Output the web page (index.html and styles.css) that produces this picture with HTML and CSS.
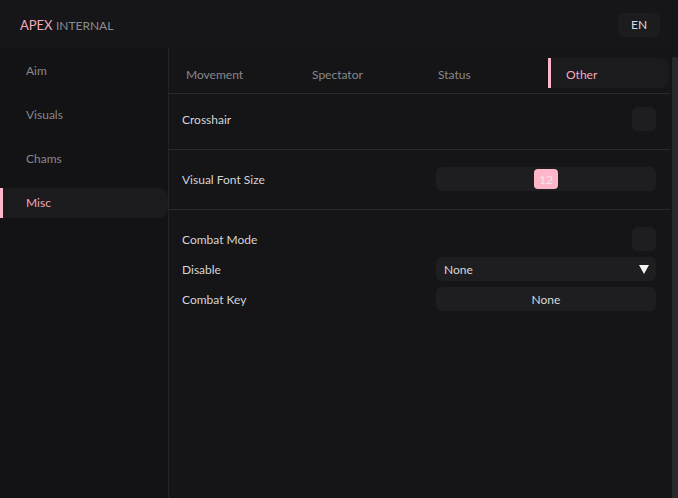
FILE: index.html
```html
<!DOCTYPE html>
<html lang="en">
<head>
  <meta charset="UTF-8">
  <title>Apex Internal</title>
  <link rel="stylesheet" href="styles.css">
</head>
<body>

<header class="topbar">
  <div class="brand"><span class="brand-main">APEX</span> <span class="brand-sub">INTERNAL</span></div>
  <div class="lang">EN</div>
</header>

<div class="layout">
  <!-- Sidebar -->
  <nav class="sidebar">
    <div class="side-item">Aim</div>
    <div class="side-item">Visuals</div>
    <div class="side-item">Chams</div>
    <div class="side-item active">Misc</div>
  </nav>

  <!-- Main -->
  <main class="main">
    <div class="content">
      <div class="tabs">
        <div class="tab">Movement</div>
        <div class="tab">Spectator</div>
        <div class="tab">Status</div>
        <div class="tab active">Other</div>
      </div>

      <section class="section first">
        <div class="row">
          <span class="label">Crosshair</span>
          <div class="check"></div>
        </div>
      </section>

      <section class="section">
        <div class="row">
          <span class="label">Visual Font Size</span>
          <div class="slider"><div class="thumb">12</div></div>
        </div>
      </section>

      <section class="section last">
        <div class="row">
          <span class="label">Combat Mode</span>
          <div class="check"></div>
        </div>
        <div class="row">
          <span class="label">Disable</span>
          <div class="combo"><span>None</span><span class="arrow"></span></div>
        </div>
        <div class="row">
          <span class="label">Combat Key</span>
          <div class="keybtn">None</div>
        </div>
      </section>
    </div>
    <div class="scrollbar"></div>
  </main>
</div>

</body>
</html>
```

FILE: styles.css
```css
* { box-sizing: border-box; }
html, body { height: 100%; }
body { margin: 0; font-family: 'Lato', sans-serif; font-size: 12px; background: #151517; color: #d6d6d8; overflow: hidden; }

.topbar { height: 48px; background: #161618; display: flex; justify-content: space-between; align-items: center; padding: 1px 18px 0 20px; }
.brand { font-size: 13px; }
.brand-main { color: #f4a9bb; }
.brand-sub { color: #8c8c90; font-size: 12px; }
.lang { background: #1c1c1e; border-radius: 6px; width: 42px; height: 24px; display: flex; align-items: center; justify-content: center; color: #dcdcde; font-size: 12px; }

.layout { display: flex; height: calc(100% - 48px); }

.sidebar { width: 169px; background: #131315; border-right: 1px solid #232325; padding-top: 8px; display: flex; flex-direction: column; gap: 14px; }
.side-item { height: 30px; line-height: 30px; padding-left: 26px; color: #88888c; border-radius: 0 9px 9px 0; }
.side-item.active { background: #1b1b1d; color: #f4a9bb; border-left: 3px solid #ffb6c8; padding-left: 23px; }

.main { flex: 1; display: flex; }
.content { flex: 1; }
.scrollbar { width: 6px; margin: 9px 0 0 2px; background: #29292b; border-radius: 2px 2px 0 0; }

.tabs { display: flex; padding: 10px 0 5px 1px; border-bottom: 1px solid #2a2a2c; }
.tab { width: 126px; height: 30px; line-height: 33px; padding-left: 16px; color: #88888c; }
.tab.active { background: #1b1b1d; border-left: 3px solid #ffb6c8; padding-left: 15px; color: #f4a9bb; border-radius: 0 8px 8px 0; width: 121px; }

.section { padding: 17px 14px 18px 13px; border-bottom: 1px solid #2a2a2c; display: flex; flex-direction: column; gap: 6px; }
.section.first { padding-top: 13px; }
.section.last { border-bottom: none; }
.row { display: flex; justify-content: space-between; align-items: center; height: 24px; }
.label { color: #d4d4d6; padding-top: 1px; }

.check { width: 24px; height: 24px; background: #1e1e20; border-radius: 6px; }
.slider { width: 220px; height: 24px; background: #1e1e20; border-radius: 6px; display: flex; align-items: center; justify-content: center; }
.thumb { width: 24px; height: 20px; background: #ffb6c8; border-radius: 4px; color: #f3e4e9; font-size: 12px; display: flex; align-items: center; justify-content: center; }
.combo { width: 220px; height: 24px; background: #1e1e20; border-radius: 6px; display: flex; align-items: center; justify-content: space-between; padding: 1px 7px 0 8px; color: #d8d8da; }
.arrow { width: 0; height: 0; border-left: 5px solid transparent; border-right: 5px solid transparent; border-top: 9px solid #f2f2f2; margin-top: -1px; }
.keybtn { width: 220px; height: 24px; background: #1e1e20; border-radius: 6px; display: flex; align-items: center; justify-content: center; color: #d8d8da; padding-top: 1px; }
```
